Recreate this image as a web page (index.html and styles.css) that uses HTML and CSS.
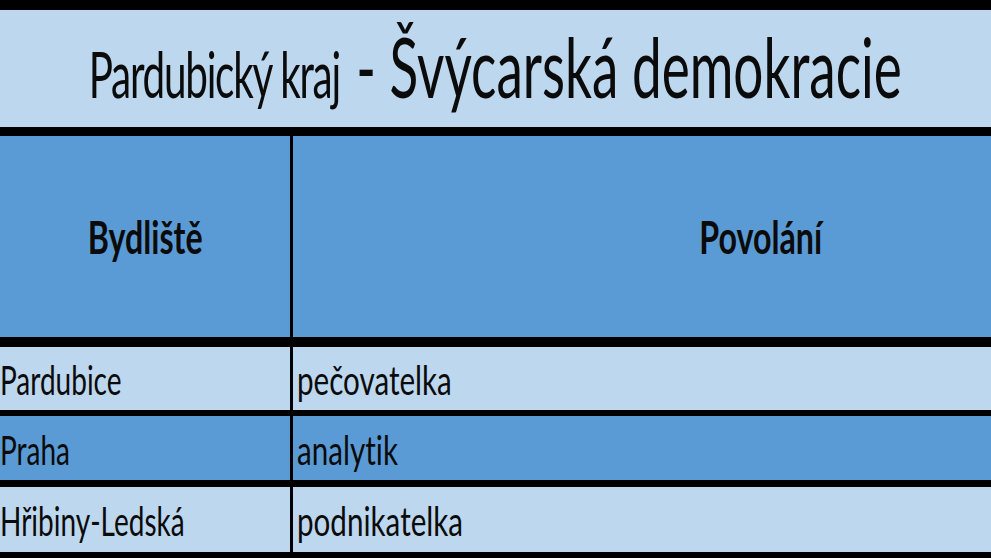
FILE: index.html
```html
<!DOCTYPE html>
<html lang="cs">
<head>
<meta charset="utf-8">
<title>Pardubický kraj - Švýcarská demokracie</title>
<link rel="stylesheet" href="styles.css">
</head>
<body>
<div class="sheet">
  <div class="title-row">
    <span class="squeeze title-text"><span class="title-small">Pardubický kraj</span><span class="title-big">- Švýcarská demokracie</span></span>
  </div>
  <div class="row head-row">
    <div class="cell head-cell"><span class="squeeze center">Bydliště</span></div>
    <div class="cell head-cell"><span class="squeeze center">Povolání</span></div>
  </div>
  <div class="row light row-1">
    <div class="cell first"><span class="squeeze">Pardubice</span></div>
    <div class="cell second"><span class="squeeze">pečovatelka</span></div>
  </div>
  <div class="row dark row-2">
    <div class="cell first"><span class="squeeze">Praha</span></div>
    <div class="cell second"><span class="squeeze">analytik</span></div>
  </div>
  <div class="row light row-3">
    <div class="cell first"><span class="squeeze">Hřibiny-Ledská</span></div>
    <div class="cell second"><span class="squeeze">podnikatelka</span></div>
  </div>
</div>
</body>
</html>
```
FILE: styles.css
```css
html, body {
  margin: 0;
  padding: 0;
  background: #000;
  overflow: hidden;
  width: 991px;
  height: 558px;
}

.sheet {
  display: flex;
  flex-direction: column;
  padding-top: 10px;
  font-family: Lato, "Open Sans", sans-serif;
  font-variant-ligatures: none;
  color: #0b0b0b;
}

.squeeze {
  display: inline-block;
  white-space: nowrap;
  transform: scaleX(0.7);
  transform-origin: left center;
}

.squeeze.center {
  transform-origin: center center;
}

.title-row {
  width: 991px;
  height: 111px;
  padding-bottom: 6px;
  background: #bdd7ee;
  display: flex;
  align-items: center;
  justify-content: center;
  overflow: hidden;
}

.title-text {
  transform: scaleX(0.632);
  transform-origin: center center;
}

.title-small {
  font-size: 64px;
  letter-spacing: -2px;
  margin-right: 26px;
}

.title-big {
  font-size: 84px;
}

.row {
  display: grid;
  grid-template-columns: 290px 936px;
  column-gap: 3px;
  width: 1229px;
}

.cell {
  display: flex;
  align-items: center;
  overflow: hidden;
}

.head-row {
  margin-top: 9px;
  height: 201px;
}

.head-cell {
  background: #5b9bd5;
  justify-content: center;
  font-size: 46px;
  font-weight: 700;
}

.light .cell { background: #bdd7ee; }
.dark .cell { background: #5b9bd5; }

.row-1 { margin-top: 10px; height: 63px; }
.row-2 { margin-top: 6px; height: 64px; }
.row-3 { margin-top: 7px; height: 65px; }

.first, .second {
  font-size: 40px;
  padding-top: 3px;
}

.second {
  padding-left: 4px;
}

.second .squeeze {
  transform: scaleX(0.74);
}
```
